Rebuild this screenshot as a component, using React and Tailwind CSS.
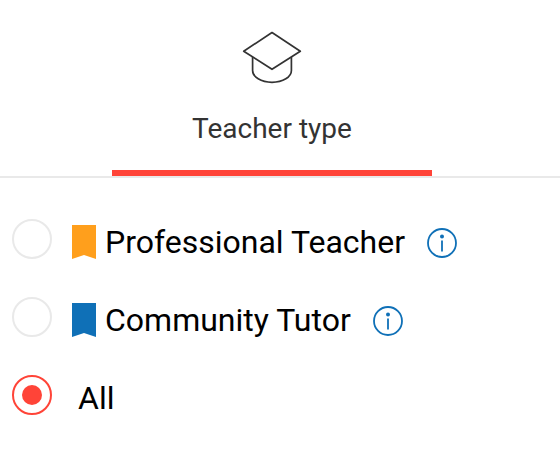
import { useState } from "react";

function CapIcon() {
  return (
    <svg
      className="h-16 w-16"
      viewBox="0 0 64 64"
      fill="none"
      stroke="#333333"
      strokeWidth="1.7"
      strokeLinejoin="round"
      aria-hidden="true"
    >
      <path d="M32 8.5 60.3 27.2 32 45.3 3.7 27.2Z" />
      <path d="M12.6 33V46.5C12.6 53 21 58.3 32 58.3S51.4 53 51.4 46.5V33" />
    </svg>
  );
}

function Flag({ className }) {
  return (
    <svg
      className={`mt-1.5 h-[34px] w-6 shrink-0 ${className}`}
      viewBox="0 0 24 34"
      fill="currentColor"
      aria-hidden="true"
    >
      <path d="M0 0H24V34L12 30 0 34Z" />
    </svg>
  );
}

function InfoIcon() {
  return (
    <svg
      className="h-[30px] w-[30px]"
      viewBox="0 0 30 30"
      fill="none"
      stroke="currentColor"
      strokeWidth="1.8"
      aria-hidden="true"
    >
      <circle cx="15" cy="15" r="14" />
      <path d="M15 12.5V23.5" />
      <circle cx="15" cy="8.5" r="2" fill="currentColor" stroke="none" />
    </svg>
  );
}

const options = [
  {
    id: "professional",
    label: "Professional Teacher",
    flag: "text-[#ff9f1c]",
  },
  {
    id: "community",
    label: "Community Tutor",
    flag: "text-[#0f70b7]",
  },
  { id: "all", label: "All" },
];

export default function App() {
  const [selected, setSelected] = useState("all");

  return (
    <div className="min-h-screen bg-white font-['Roboto',sans-serif]">
      <div role="tablist" className="border-b-2 border-[#e9e9e9] pl-28">
        <button
          type="button"
          role="tab"
          aria-selected="true"
          className="flex w-80 flex-col items-center border-b-[6px] border-[#ff4438] pt-6 pb-[25px] text-[28px] leading-8 text-[#333333]"
        >
          <CapIcon />
          <span className="mt-[25px]">Teacher type</span>
        </button>
      </div>

      <div
        role="radiogroup"
        aria-label="Teacher type"
        className="flex flex-col gap-8 px-3 pt-[41px]"
      >
        {options.map((option) => (
          <div key={option.id} className="flex items-start">
            <input
              type="radio"
              id={option.id}
              name="teacher-type"
              checked={selected === option.id}
              onChange={() => setSelected(option.id)}
              className="grid h-10 w-10 shrink-0 appearance-none place-items-center rounded-full border-2 border-[#e9e9e9] before:h-5 before:w-5 before:rounded-full checked:border-[#ff4438] checked:before:bg-[#ff4438]"
            />
            <label
              htmlFor={option.id}
              className={`flex items-start text-[32px] leading-[46px] text-black ${
                option.flag ? "ml-5 gap-[9px]" : "ml-[26px]"
              }`}
            >
              {option.flag && <Flag className={option.flag} />}
              {option.label}
            </label>
            {option.flag && (
              <button
                type="button"
                aria-label={`About ${option.label}`}
                className="mt-[9px] ml-[22px] text-[#0f70b7]"
              >
                <InfoIcon />
              </button>
            )}
          </div>
        ))}
      </div>
    </div>
  );
}
